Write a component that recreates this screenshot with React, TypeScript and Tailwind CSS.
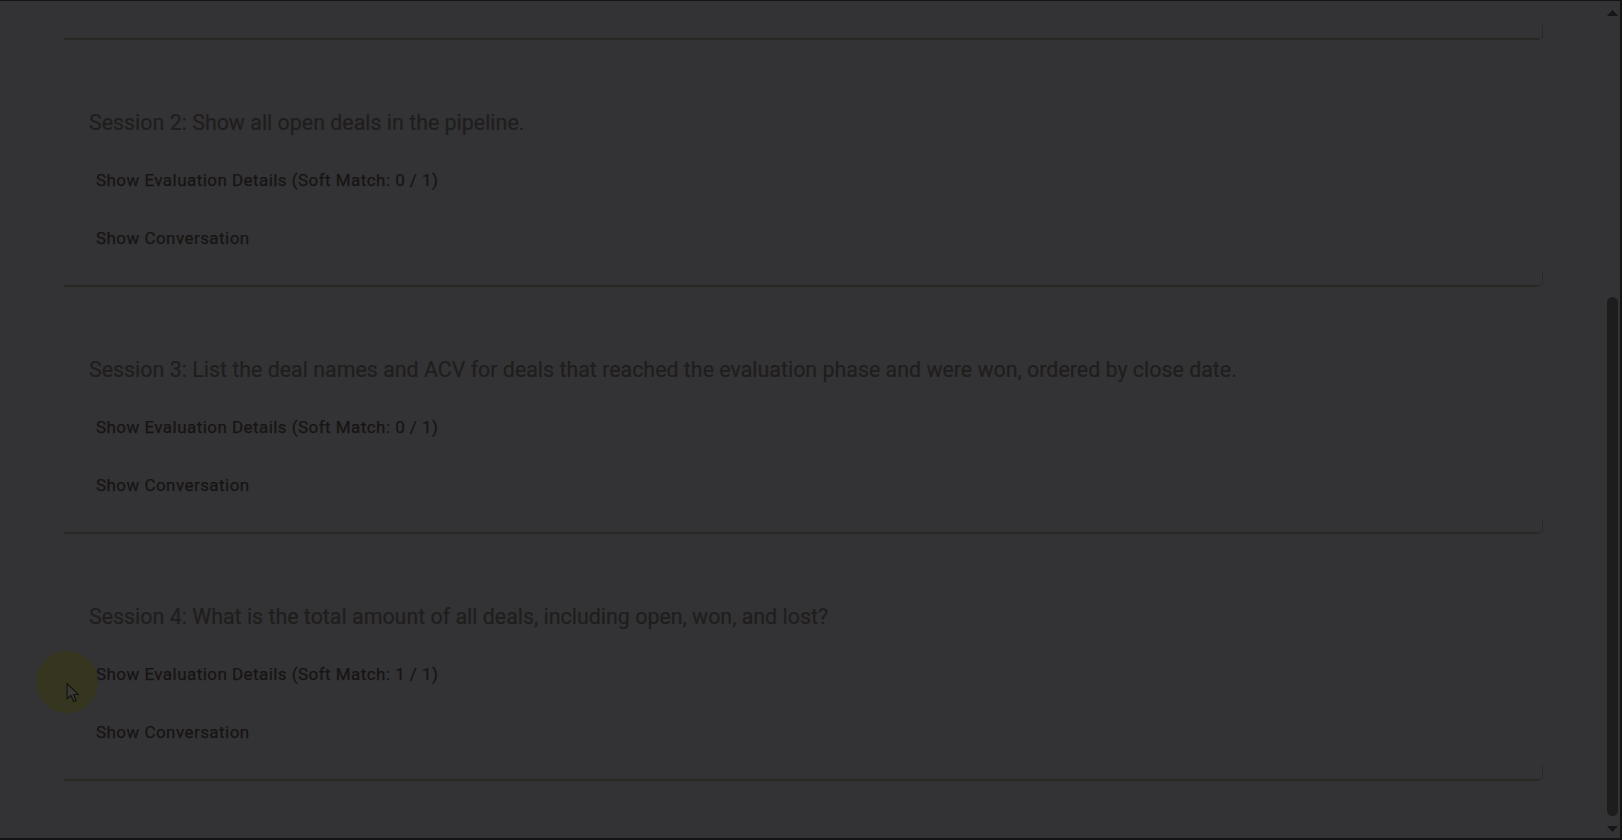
import React from 'react';

type Session = {
  id: number;
  question: string;
  matched: number;
  total: number;
};

const SESSIONS: Session[] = [
  { id: 2, question: 'Show all open deals in the pipeline.', matched: 0, total: 1 },
  {
    id: 3,
    question:
      'List the deal names and ACV for deals that reached the evaluation phase and were won, ordered by close date.',
    matched: 0,
    total: 1,
  },
  {
    id: 4,
    question: 'What is the total amount of all deals, including open, won, and lost?',
    matched: 1,
    total: 1,
  },
];

const cardEdge =
  "relative rounded-br-[4px] border-b-2 border-[#292824] after:content-[''] after:absolute after:right-[-2px] after:bottom-0 after:h-[13px] after:w-px after:bg-[#292824]";

function TextButton({ children }: { children: React.ReactNode }) {
  return (
    <button
      type="button"
      className="block rounded px-[7px] py-[8px] text-left text-[17px] font-normal leading-[24px] tracking-[0.45px] text-[#171414] [-webkit-text-stroke:0.25px_#171414]"
    >
      {children}
    </button>
  );
}

function SessionCard({ session }: { session: Session }) {
  return (
    <section className={`${cardEdge} h-[247px] pl-[25px] pt-[69px]`}>
      <h2 className="text-[21.4px] font-normal leading-[28px] text-[#201d1d] [-webkit-text-stroke:0.2px_#201d1d]">
        Session {session.id}: {session.question}
      </h2>
      <div className="mt-[23px]">
        <TextButton>
          Show Evaluation Details (Soft Match: {session.matched} / {session.total})
        </TextButton>
      </div>
      <div className="mt-[18px]">
        <TextButton>Show Conversation</TextButton>
      </div>
    </section>
  );
}

function Scrollbar() {
  return (
    <div className="flex w-[17px] shrink-0 flex-col items-center border-r-2 border-[#141414] bg-[#333335]">
      <svg width="11" height="6" viewBox="0 0 11 6" className="mt-[9px] shrink-0">
        <path d="M5.5 0 L11 6 L0 6 Z" fill="#151515" />
      </svg>
      <div className="h-[281px] shrink-0" />
      <div className="h-[519px] w-[11px] shrink-0 rounded-full bg-[#1d1d1e]" />
      <div className="flex-1" />
      <svg width="11" height="6" viewBox="0 0 11 6" className="mb-[6px] shrink-0">
        <path d="M0 0 L11 0 L5.5 6 Z" fill="#151515" />
      </svg>
    </div>
  );
}

export default function App() {
  return (
    <div
      className="relative flex h-[840px] w-full overflow-hidden border-t border-b-2 border-[#141414] bg-[#333335]"
      style={{ fontFamily: 'Roboto, "Open Sans", sans-serif' }}
    >
      <main className="min-w-0 flex-1 pl-[64px] pr-[64px]">
        <div className={`${cardEdge} h-[39px]`} />
        {SESSIONS.map((s) => (
          <SessionCard key={s.id} session={s} />
        ))}
      </main>
      <Scrollbar />

      {/* cursor highlight from the recording */}
      <div className="pointer-events-none absolute left-[36px] top-[650px] h-[62px] w-[62px] rounded-full bg-[#36351f]" />
      <svg
        width="14"
        height="21"
        viewBox="0 0 13 19"
        className="pointer-events-none absolute left-[66px] top-[681px]"
      >
        <path
          d="M1 1 L1 15.5 L4.6 12.3 L7.2 18 L9.4 17 L6.9 11.4 L11.5 11.4 Z"
          fill="#3a3934"
          stroke="#111111"
          strokeWidth="1"
          strokeLinejoin="round"
        />
      </svg>
    </div>
  );
}
